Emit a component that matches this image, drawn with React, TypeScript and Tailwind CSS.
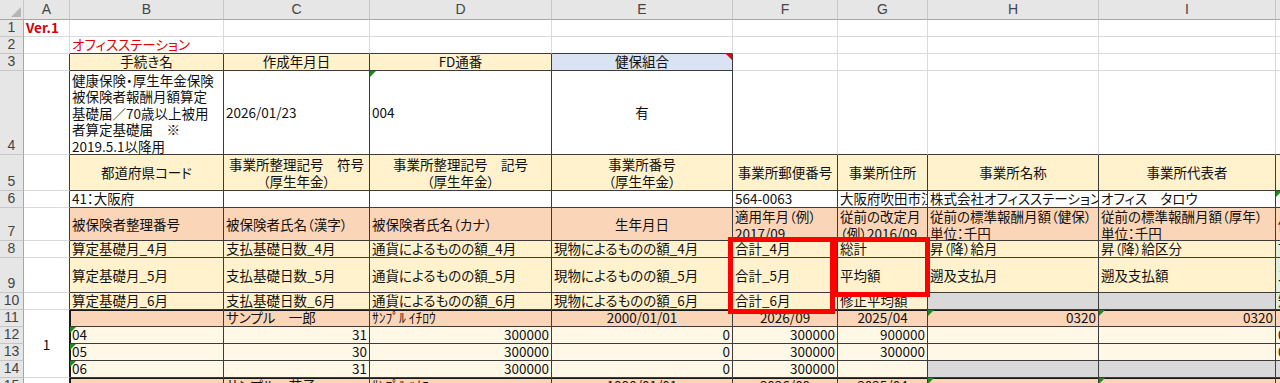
import React from 'react';
import clsx from 'clsx';

type CellProps = {
  t?: React.ReactNode;
  bg?: string;
  a?: 'l' | 'c' | 'r';
  v?: 't' | 'c' | 'b';
  dark?: boolean;
  tri?: 'g' | 'r';
  x?: string;
  lx?: string;
};

const Cell: React.FC<CellProps> = ({ t, bg = 'bg-white', a = 'l', v = 'b', dark = false, tri, x = '', lx = 'leading-[17px]' }) => {
  const ha = a === 'c' ? 'justify-center text-center' : a === 'r' ? 'justify-end text-right' : 'justify-start text-left';
  const va = v === 'c' ? 'items-center' : v === 't' ? 'items-start' : 'items-end';
  return (
    <div
      className={clsx(
        'relative flex overflow-hidden whitespace-pre px-[2px] border-r border-b',
        dark ? 'border-[#3c3c3c]' : 'border-[#dadada]',
        bg,
        ha,
        va,
        x
      )}
    >
      {tri === 'g' && (
        <span className="absolute left-0 top-0 w-0 h-0 border-t-[6px] border-r-[6px] border-t-[#1e8a1e] border-r-transparent" />
      )}
      {tri === 'r' && (
        <span className="absolute right-0 top-0 w-0 h-0 border-t-[6px] border-l-[6px] border-t-[#ee0000] border-l-transparent" />
      )}
      <span className={lx}>{t}</span>
    </div>
  );
};

const ColHead: React.FC<{ t?: string }> = ({ t }) => (
  <div className="flex items-center justify-center bg-[#e6e6e6] border-r border-b border-r-[#c6c6c6] border-b-[#a6a6a6] text-[#444] text-[14px] font-['Liberation_Sans',sans-serif]">
    {t}
  </div>
);

const RowHead: React.FC<{ n: number }> = ({ n }) => (
  <div className="flex items-end justify-center bg-[#e6e6e6] border-r border-b border-r-[#a6a6a6] border-b-[#c6c6c6] text-[#444] text-[14px] leading-[17px] font-['Liberation_Sans',sans-serif]">
    {n}
  </div>
);

const YEL = 'bg-[#fff2cc]';
const SAL = 'bg-[#fbd5b8]';
const LT = 'bg-[#fff8e7]';
const GRY = 'bg-[#d9d9d9]';
const GRN = 'bg-[#e2efda]';
const TOP = 'shadow-[inset_0_1px_0_#1a1a1a]';
const TOPL = 'shadow-[inset_1px_0_0_#1a1a1a,inset_0_1px_0_#1a1a1a]';
const LEFT = 'shadow-[inset_1px_0_0_#1a1a1a]';

export default function App() {
  return (
    <div className="relative w-[1280px] h-[383px] overflow-hidden bg-white text-[13.5px] text-[#111] font-['Noto_Sans_CJK_JP',sans-serif] [font-feature-settings:'palt']">
      <div className="grid grid-cols-[24px_46px_154px_146px_182px_181px_105px_90px_171px_177px_1fr] grid-rows-[20px_17px_17px_17px_84px_36px_17px_33px_17px_35px_17px_17px_17px_17px_17px_17px]">
        {/* column headers */}
        <div className="relative bg-[#e6e6e6] border-r border-b border-r-[#c6c6c6] border-b-[#a6a6a6]">
          <svg className="absolute right-[2px] bottom-[2px]" width="10" height="10" viewBox="0 0 10 10">
            <polygon points="10,0 10,10 0,10" fill="#b5b5b5" />
          </svg>
        </div>
        {['A', 'B', 'C', 'D', 'E', 'F', 'G', 'H', 'I', ''].map((c, i) => (
          <ColHead key={i} t={c} />
        ))}

        {/* 1 */}
        <RowHead n={1} />
        <Cell t="Ver.1" x="text-[#d40000] font-bold" />
        <Cell /><Cell /><Cell /><Cell /><Cell /><Cell /><Cell /><Cell /><Cell />

        {/* 2 */}
        <RowHead n={2} />
        <Cell />
        <Cell t="オフィスステーション" x="text-[#e00000] border-b-[#3c3c3c]" />
        <Cell x="border-b-[#3c3c3c]" />
        <Cell x="border-b-[#3c3c3c]" />
        <Cell x="border-b-[#3c3c3c]" />
        <Cell /><Cell /><Cell /><Cell /><Cell />

        {/* 3 */}
        <RowHead n={3} />
        <Cell x="border-r-[#3c3c3c]" />
        <Cell dark bg={YEL} a="c" t="手続き名" />
        <Cell dark bg={YEL} a="c" t="作成年月日" />
        <Cell dark bg={YEL} a="c" t="FD通番" />
        <Cell dark bg="bg-[#dae3f3]" a="c" t="健保組合" tri="r" />
        <Cell /><Cell /><Cell /><Cell /><Cell />

        {/* 4 */}
        <RowHead n={4} />
        <Cell x="border-r-[#3c3c3c]" />
        <Cell
          dark
          v="t"
          lx="leading-[16.4px] pt-[1px]"
          t={'健康保険・厚生年金保険\n被保険者報酬月額算定\n基礎届／70歳以上被用\n者算定基礎届　※\n2019.5.1以降用'}
        />
        <Cell dark v="c" t="2026/01/23" />
        <Cell dark v="c" t="004" tri="g" />
        <Cell dark v="c" a="c" t="有" />
        <Cell x="border-b-[#3c3c3c]" />
        <Cell x="border-b-[#3c3c3c]" />
        <Cell x="border-b-[#3c3c3c]" />
        <Cell x="border-b-[#3c3c3c]" />
        <Cell x="border-b-[#3c3c3c]" />

        {/* 5 */}
        <RowHead n={5} />
        <Cell x="border-r-[#3c3c3c]" />
        <Cell dark bg={YEL} a="c" v="c" t="都道府県コード" />
        <Cell dark bg={YEL} a="c" v="c" t={'事業所整理記号　符号\n（厚生年金）'} />
        <Cell dark bg={YEL} a="c" v="c" t={'事業所整理記号　記号\n（厚生年金）'} />
        <Cell dark bg={YEL} a="c" v="c" t={'事業所番号\n（厚生年金）'} />
        <Cell dark bg={YEL} a="c" v="c" t="事業所郵便番号" />
        <Cell dark bg={YEL} a="c" v="c" t="事業所住所" />
        <Cell dark bg={YEL} a="c" v="c" t="事業所名称" />
        <Cell dark bg={YEL} a="c" v="c" t="事業所代表者" />
        <Cell dark bg={YEL} />

        {/* 6 */}
        <RowHead n={6} />
        <Cell x="border-r-[#3c3c3c]" />
        <Cell dark t="41：大阪府" />
        <Cell dark />
        <Cell dark />
        <Cell dark />
        <Cell dark t="564-0063" />
        <Cell dark t="大阪府吹田市江坂町" />
        <Cell dark t="株式会社オフィスステーション" />
        <Cell dark t="オフィス　タロウ" />
        <Cell dark tri="g" />

        {/* 7 */}
        <RowHead n={7} />
        <Cell x="border-r-[#3c3c3c]" />
        <Cell dark bg={SAL} v="c" t="被保険者整理番号" />
        <Cell dark bg={SAL} v="c" t="被保険者氏名（漢字）" />
        <Cell dark bg={SAL} v="c" t="被保険者氏名（カナ）" />
        <Cell dark bg={SAL} v="c" a="c" t="生年月日" />
        <Cell dark bg={SAL} v="t" lx="leading-[16.5px]" t={'適用年月（例）\n2017/09'} />
        <Cell dark bg={SAL} v="t" lx="leading-[16.5px]" t={'従前の改定月\n（例）2016/09'} />
        <Cell dark bg={SAL} v="t" lx="leading-[16.5px]" t={'従前の標準報酬月額（健保）\n単位：千円'} />
        <Cell dark bg={SAL} v="t" lx="leading-[16.5px]" t={'従前の標準報酬月額（厚年）\n単位：千円'} />
        <Cell dark bg={SAL} v="c" t="備考" />

        {/* 8 */}
        <RowHead n={8} />
        <Cell x="border-r-[#3c3c3c]" />
        <Cell dark bg={YEL} t="算定基礎月_4月" />
        <Cell dark bg={YEL} t="支払基礎日数_4月" />
        <Cell dark bg={YEL} t="通貨によるものの額_4月" />
        <Cell dark bg={YEL} t="現物によるものの額_4月" />
        <Cell dark bg={YEL} t="合計_4月" />
        <Cell dark bg={YEL} t="総計" />
        <Cell dark bg={YEL} t="昇（降）給月" />
        <Cell dark bg={YEL} t="昇（降）給区分" />
        <Cell dark bg={GRN} t="70歳以上" />

        {/* 9 */}
        <RowHead n={9} />
        <Cell x="border-r-[#3c3c3c]" />
        <Cell dark bg={YEL} v="c" t="算定基礎月_5月" />
        <Cell dark bg={YEL} v="c" t="支払基礎日数_5月" />
        <Cell dark bg={YEL} v="c" t="通貨によるものの額_5月" />
        <Cell dark bg={YEL} v="c" t="現物によるものの額_5月" />
        <Cell dark bg={YEL} v="c" t="合計_5月" />
        <Cell dark bg={YEL} v="c" t="平均額" />
        <Cell dark bg={YEL} v="c" t="遡及支払月" />
        <Cell dark bg={YEL} v="c" t="遡及支払額" />
        <Cell dark bg={GRN} v="c" t="二以上" />

        {/* 10 */}
        <RowHead n={10} />
        <Cell x="border-r-[#3c3c3c]" />
        <Cell dark bg={YEL} t="算定基礎月_6月" />
        <Cell dark bg={YEL} t="支払基礎日数_6月" />
        <Cell dark bg={YEL} t="通貨によるものの額_6月" />
        <Cell dark bg={YEL} t="現物によるものの額_6月" />
        <Cell dark bg={YEL} t="合計_6月" />
        <Cell dark bg={YEL} t="修正平均額" />
        <Cell dark bg={GRY} />
        <Cell dark bg={GRY} />
        <Cell dark bg={GRN} t="短時間" />

        {/* 11 */}
        <RowHead n={11} />
        <div className="row-span-4 flex items-center justify-center bg-white border-r border-b border-r-[#1a1a1a] border-b-[#dadada] pt-[2px]">
          1
        </div>
        <Cell dark bg={SAL} x={TOPL} />
        <Cell dark bg={SAL} x={TOP} t="サンプル　一郎" />
        <Cell dark bg={SAL} x={TOP} t="ｻﾝﾌﾟﾙ ｲﾁﾛｳ" />
        <Cell dark bg={SAL} x={TOP} a="c" t="2000/01/01" />
        <Cell dark bg={SAL} x={TOP} a="c" t="2026/09" />
        <Cell dark bg={SAL} x={TOP} a="c" t="2025/04" />
        <Cell dark bg={SAL} x={TOP} a="r" t="0320" tri="g" />
        <Cell dark bg={SAL} x={TOP} a="r" t="0320" tri="g" />
        <Cell dark bg={SAL} x={TOP} />

        {/* 12 */}
        <RowHead n={12} />
        <Cell dark bg={LT} x={LEFT} t="04" tri="g" />
        <Cell dark bg={LT} a="r" t="31" />
        <Cell dark bg={LT} a="r" t="300000" />
        <Cell dark bg={LT} a="r" t="0" />
        <Cell dark bg={LT} a="r" t="300000" />
        <Cell dark bg={LT} a="r" t="900000" />
        <Cell dark bg={LT} />
        <Cell dark bg={LT} />
        <Cell dark bg={LT} t="0" />

        {/* 13 */}
        <RowHead n={13} />
        <Cell dark bg={LT} x={LEFT} t="05" tri="g" />
        <Cell dark bg={LT} a="r" t="30" />
        <Cell dark bg={LT} a="r" t="300000" />
        <Cell dark bg={LT} a="r" t="0" />
        <Cell dark bg={LT} a="r" t="300000" />
        <Cell dark bg={LT} a="r" t="300000" />
        <Cell dark bg={LT} />
        <Cell dark bg={LT} />
        <Cell dark bg={LT} t="0" />

        {/* 14 */}
        <RowHead n={14} />
        <Cell dark bg={LT} x={LEFT} t="06" tri="g" />
        <Cell dark bg={LT} a="r" t="31" />
        <Cell dark bg={LT} a="r" t="300000" />
        <Cell dark bg={LT} a="r" t="0" />
        <Cell dark bg={LT} a="r" t="300000" />
        <Cell dark bg={LT} />
        <Cell dark bg={GRY} />
        <Cell dark bg={GRY} />
        <Cell dark bg={GRY} />

        {/* 15 */}
        <RowHead n={15} />
        <Cell x="border-r-[#1a1a1a]" />
        <Cell dark bg={SAL} x={TOPL} />
        <Cell dark bg={SAL} x={TOP} t="サンプル　花子" />
        <Cell dark bg={SAL} x={TOP} t="ｻﾝﾌﾟﾙ ﾊﾅｺ" />
        <Cell dark bg={SAL} x={TOP} a="c" t="1990/01/01" />
        <Cell dark bg={SAL} x={TOP} a="c" t="2026/09" />
        <Cell dark bg={SAL} x={TOP} a="c" t="2025/04" />
        <Cell dark bg={SAL} x={TOP} a="r" tri="g" />
        <Cell dark bg={SAL} x={TOP} a="r" tri="g" />
        <Cell dark bg={SAL} x={TOP} />
      </div>

      {/* highlight boxes */}
      <div className="absolute left-[728px] top-[237px] w-[107px] h-[77px] border-[5px] border-[#ff0000]" />
      <div className="absolute left-[832px] top-[237px] w-[98px] h-[60px] border-[5px] border-[#ff0000]" />
    </div>
  );
}
